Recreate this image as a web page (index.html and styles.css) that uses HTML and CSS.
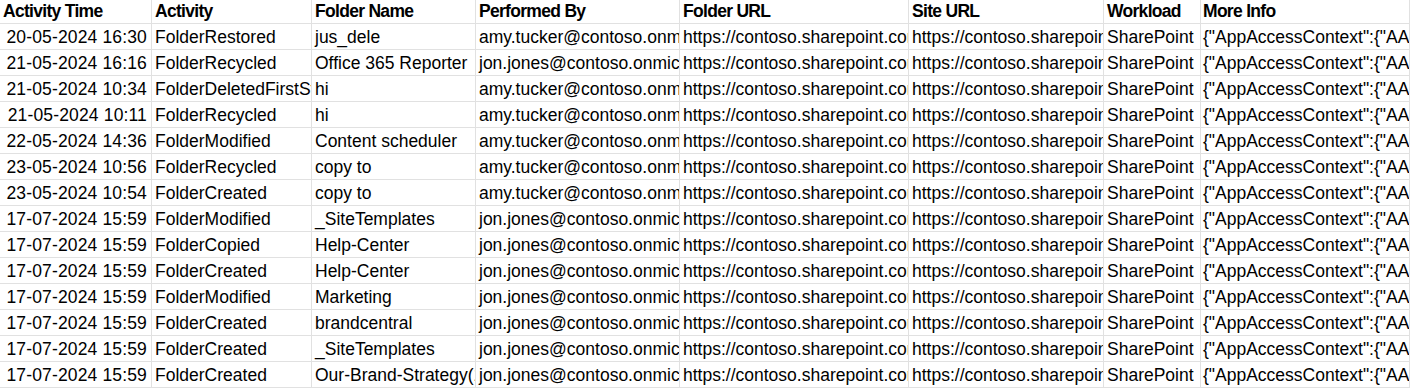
FILE: index.html
```html
<!DOCTYPE html>
<html>
<head>
<meta charset="utf-8">
<link rel="stylesheet" href="styles.css">
</head>
<body>
<div class="sheet">
  <div class="row head">
    <div class="c">Activity Time</div>
    <div class="c">Activity</div>
    <div class="c">Folder Name</div>
    <div class="c">Performed By</div>
    <div class="c">Folder URL</div>
    <div class="c">Site URL</div>
    <div class="c">Workload</div>
    <div class="c info">More Info</div>
  </div>
  <div class="row"><div class="c num">20-05-2024 16:30</div><div class="c">FolderRestored</div><div class="c">jus_dele</div><div class="c">amy.tucker@contoso.onmicrosoft.com</div><div class="c">https://contoso.sharepoint.com/sites/</div><div class="c">https://contoso.sharepoint.com/sites/</div><div class="c">SharePoint</div><div class="c info">{"AppAccessContext":{"AADSessionId":"</div></div>
  <div class="row"><div class="c num">21-05-2024 16:16</div><div class="c">FolderRecycled</div><div class="c">Office 365 Reporter</div><div class="c">jon.jones@contoso.onmicrosoft.com</div><div class="c">https://contoso.sharepoint.com/sites/</div><div class="c">https://contoso.sharepoint.com/sites/</div><div class="c">SharePoint</div><div class="c info">{"AppAccessContext":{"AADSessionId":"</div></div>
  <div class="row"><div class="c num">21-05-2024 10:34</div><div class="c">FolderDeletedFirstStageRecycleBin</div><div class="c">hi</div><div class="c">amy.tucker@contoso.onmicrosoft.com</div><div class="c">https://contoso.sharepoint.com/sites/</div><div class="c">https://contoso.sharepoint.com/sites/</div><div class="c">SharePoint</div><div class="c info">{"AppAccessContext":{"AADSessionId":"</div></div>
  <div class="row"><div class="c num">21-05-2024 10:11</div><div class="c">FolderRecycled</div><div class="c">hi</div><div class="c">amy.tucker@contoso.onmicrosoft.com</div><div class="c">https://contoso.sharepoint.com/sites/</div><div class="c">https://contoso.sharepoint.com/sites/</div><div class="c">SharePoint</div><div class="c info">{"AppAccessContext":{"AADSessionId":"</div></div>
  <div class="row"><div class="c num">22-05-2024 14:36</div><div class="c">FolderModified</div><div class="c">Content scheduler</div><div class="c">amy.tucker@contoso.onmicrosoft.com</div><div class="c">https://contoso.sharepoint.com/sites/</div><div class="c">https://contoso.sharepoint.com/sites/</div><div class="c">SharePoint</div><div class="c info">{"AppAccessContext":{"AADSessionId":"</div></div>
  <div class="row"><div class="c num">23-05-2024 10:56</div><div class="c">FolderRecycled</div><div class="c">copy to</div><div class="c">amy.tucker@contoso.onmicrosoft.com</div><div class="c">https://contoso.sharepoint.com/sites/</div><div class="c">https://contoso.sharepoint.com/sites/</div><div class="c">SharePoint</div><div class="c info">{"AppAccessContext":{"AADSessionId":"</div></div>
  <div class="row"><div class="c num">23-05-2024 10:54</div><div class="c">FolderCreated</div><div class="c">copy to</div><div class="c">amy.tucker@contoso.onmicrosoft.com</div><div class="c">https://contoso.sharepoint.com/sites/</div><div class="c">https://contoso.sharepoint.com/sites/</div><div class="c">SharePoint</div><div class="c info">{"AppAccessContext":{"AADSessionId":"</div></div>
  <div class="row"><div class="c num">17-07-2024 15:59</div><div class="c">FolderModified</div><div class="c">_SiteTemplates</div><div class="c">jon.jones@contoso.onmicrosoft.com</div><div class="c">https://contoso.sharepoint.com/sites/</div><div class="c">https://contoso.sharepoint.com/sites/</div><div class="c">SharePoint</div><div class="c info">{"AppAccessContext":{"AADSessionId":"</div></div>
  <div class="row"><div class="c num">17-07-2024 15:59</div><div class="c">FolderCopied</div><div class="c">Help-Center</div><div class="c">jon.jones@contoso.onmicrosoft.com</div><div class="c">https://contoso.sharepoint.com/sites/</div><div class="c">https://contoso.sharepoint.com/sites/</div><div class="c">SharePoint</div><div class="c info">{"AppAccessContext":{"AADSessionId":"</div></div>
  <div class="row"><div class="c num">17-07-2024 15:59</div><div class="c">FolderCreated</div><div class="c">Help-Center</div><div class="c">jon.jones@contoso.onmicrosoft.com</div><div class="c">https://contoso.sharepoint.com/sites/</div><div class="c">https://contoso.sharepoint.com/sites/</div><div class="c">SharePoint</div><div class="c info">{"AppAccessContext":{"AADSessionId":"</div></div>
  <div class="row"><div class="c num">17-07-2024 15:59</div><div class="c">FolderModified</div><div class="c">Marketing</div><div class="c">jon.jones@contoso.onmicrosoft.com</div><div class="c">https://contoso.sharepoint.com/sites/</div><div class="c">https://contoso.sharepoint.com/sites/</div><div class="c">SharePoint</div><div class="c info">{"AppAccessContext":{"AADSessionId":"</div></div>
  <div class="row"><div class="c num">17-07-2024 15:59</div><div class="c">FolderCreated</div><div class="c">brandcentral</div><div class="c">jon.jones@contoso.onmicrosoft.com</div><div class="c">https://contoso.sharepoint.com/sites/</div><div class="c">https://contoso.sharepoint.com/sites/</div><div class="c">SharePoint</div><div class="c info">{"AppAccessContext":{"AADSessionId":"</div></div>
  <div class="row"><div class="c num">17-07-2024 15:59</div><div class="c">FolderCreated</div><div class="c">_SiteTemplates</div><div class="c">jon.jones@contoso.onmicrosoft.com</div><div class="c">https://contoso.sharepoint.com/sites/</div><div class="c">https://contoso.sharepoint.com/sites/</div><div class="c">SharePoint</div><div class="c info">{"AppAccessContext":{"AADSessionId":"</div></div>
  <div class="row"><div class="c num">17-07-2024 15:59</div><div class="c">FolderCreated</div><div class="c">Our-Brand-Strategy(1)</div><div class="c">jon.jones@contoso.onmicrosoft.com</div><div class="c">https://contoso.sharepoint.com/sites/</div><div class="c">https://contoso.sharepoint.com/sites/</div><div class="c">SharePoint</div><div class="c info">{"AppAccessContext":{"AADSessionId":"</div></div>
</div>
</body>
</html>
```

FILE: styles.css
```css
html, body {
  margin: 0;
  padding: 0;
  background: #ffffff;
  overflow: hidden;
}
.sheet {
  font-family: "Liberation Sans", Arial, sans-serif;
  font-size: 17.5px;
  color: #000000;
  width: 1410px;
}
.row {
  display: grid;
  grid-template-columns: 152px 160px 164px 204px 229px 195px 97px 1fr;
  height: 26px;
}
.row.head {
  height: 24px;
  font-weight: bold;
}
.c {
  box-sizing: border-box;
  border-right: 1px solid #e1e1e1;
  border-bottom: 1px solid #e1e1e1;
  white-space: nowrap;
  overflow: hidden;
  padding: 2px 0 0 3px;
  line-height: 23px;
}
.head .c {
  padding-top: 0;
  line-height: 23px;
  letter-spacing: -0.7px;
}
.c.num {
  text-align: right;
  padding-right: 4px;
  padding-left: 0;
  letter-spacing: 0.15px;
}
.c.info {
  padding-left: 2px;
}
```
